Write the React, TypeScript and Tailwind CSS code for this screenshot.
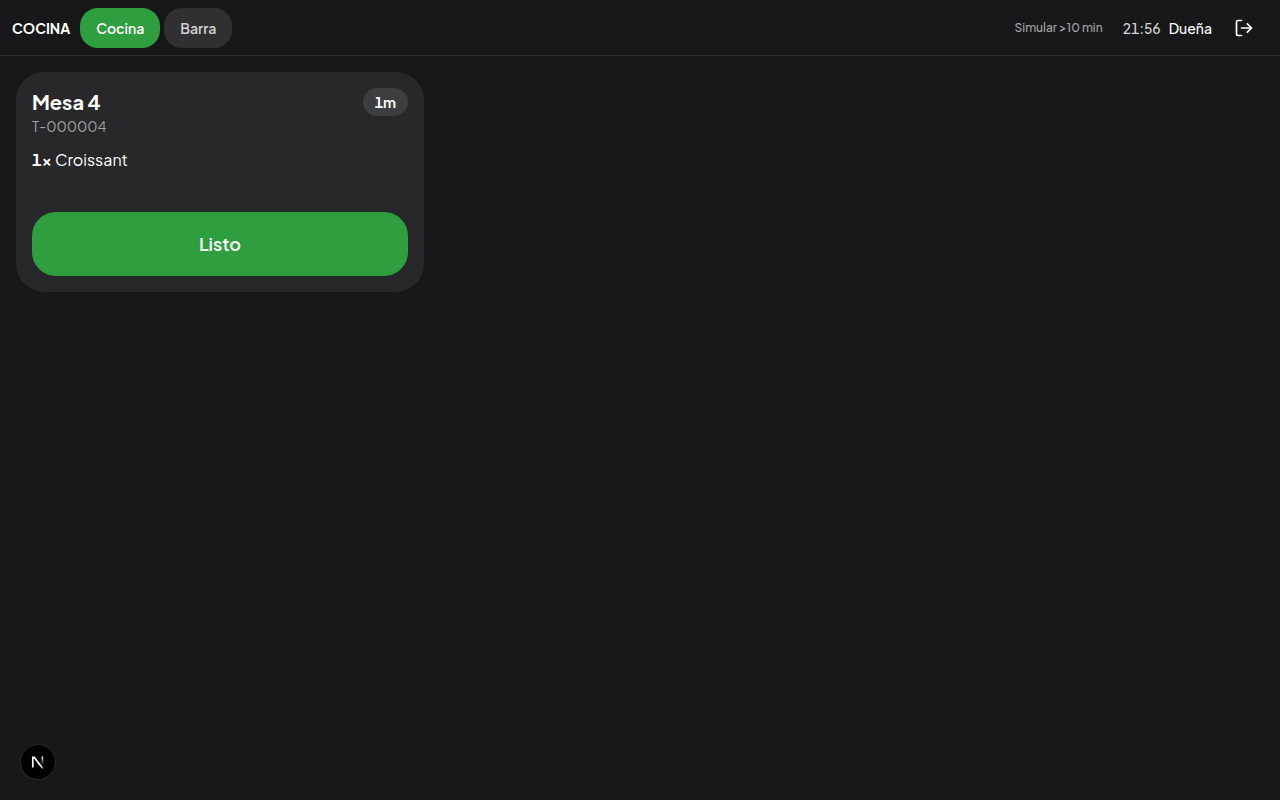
import { LogOut } from "lucide-react";
import { useState } from "react";

const stations = ["Cocina", "Barra"];

function Header() {
  const [active, setActive] = useState("Cocina");
  return (
    <header className="flex h-14 items-center justify-between border-b border-[#2f2f31] px-3">
      <div className="flex items-center gap-2.5">
        <h1 className="text-sm font-bold">COCINA</h1>
        <nav className="flex gap-1">
          {stations.map((name) => (
            <button
              key={name}
              type="button"
              onClick={() => setActive(name)}
              className={
                name === active
                  ? "h-10 rounded-[18px] bg-[#2f9e3f] px-4 text-sm font-semibold text-white"
                  : "h-10 rounded-[18px] bg-[#303032] px-4 text-sm font-semibold text-[#d0d0d0]"
              }
            >
              {name}
            </button>
          ))}
        </nav>
      </div>
      <div className="flex items-center gap-2 text-sm">
        <button type="button" className="px-3 text-xs font-medium text-[#a3a3a3]">
          Simular &gt;10 min
        </button>
        <time className="font-medium text-[#d4d4d4] tabular-nums">21:56</time>
        <span className="font-medium">Dueña</span>
        <button type="button" aria-label="Salir" className="flex size-12 items-center justify-center">
          <LogOut size={20} strokeWidth={2} />
        </button>
      </div>
    </header>
  );
}

function OrderCard() {
  return (
    <article className="flex flex-col rounded-[28px] bg-[#28282a] p-4">
      <div className="flex items-start justify-between">
        <div>
          <h2 className="text-xl leading-7 font-bold">Mesa 4</h2>
          <p className="text-sm leading-5 text-[#a3a3a3]">T-000004</p>
        </div>
        <span className="rounded-full bg-[#3d3e3f] px-3 text-sm leading-7 font-bold tabular-nums">1m</span>
      </div>
      <ul className="mt-3">
        <li className="text-base leading-6">
          <span className="font-bold tabular-nums">1×</span> Croissant
        </li>
      </ul>
      <button
        type="button"
        className="mt-10 h-16 rounded-[24px] bg-[#2f9e3f] text-lg font-semibold text-white"
      >
        Listo
      </button>
    </article>
  );
}

function DevBadge() {
  return (
    <button
      type="button"
      aria-label="Open developer tools"
      className="fixed bottom-5 left-5 flex size-9 items-center justify-center rounded-full border border-[#2b2b2b] bg-black"
    >
      <svg width="14" height="14" viewBox="0 0 14 14" fill="none" aria-hidden="true">
        <defs>
          <linearGradient id="diagonal" x1="8" y1="8" x2="13" y2="14" gradientUnits="userSpaceOnUse">
            <stop stopColor="#fff" />
            <stop offset="0.6" stopColor="#fff" stopOpacity="0.8" />
            <stop offset="1" stopColor="#fff" stopOpacity="0" />
          </linearGradient>
          <linearGradient id="stem" x1="11" y1="1" x2="11" y2="10.5" gradientUnits="userSpaceOnUse">
            <stop stopColor="#fff" />
            <stop offset="1" stopColor="#fff" stopOpacity="0" />
          </linearGradient>
        </defs>
        <path d="M1.8 12.5V2.3H3.2L8.6 9.4" stroke="#fff" strokeWidth="1.7" />
        <path d="M8 8.6L12.3 14" stroke="url(#diagonal)" strokeWidth="1.7" />
        <path d="M11.4 1.5V10.5" stroke="url(#stem)" strokeWidth="1.7" />
      </svg>
    </button>
  );
}

export default function App() {
  return (
    <div className="min-h-screen bg-[#18181a] font-['Plus_Jakarta_Sans',Inter,sans-serif] text-white">
      <Header />
      <main className="grid grid-cols-1 gap-3 p-4 sm:grid-cols-2 lg:grid-cols-3">
        <OrderCard />
      </main>
      <DevBadge />
    </div>
  );
}
